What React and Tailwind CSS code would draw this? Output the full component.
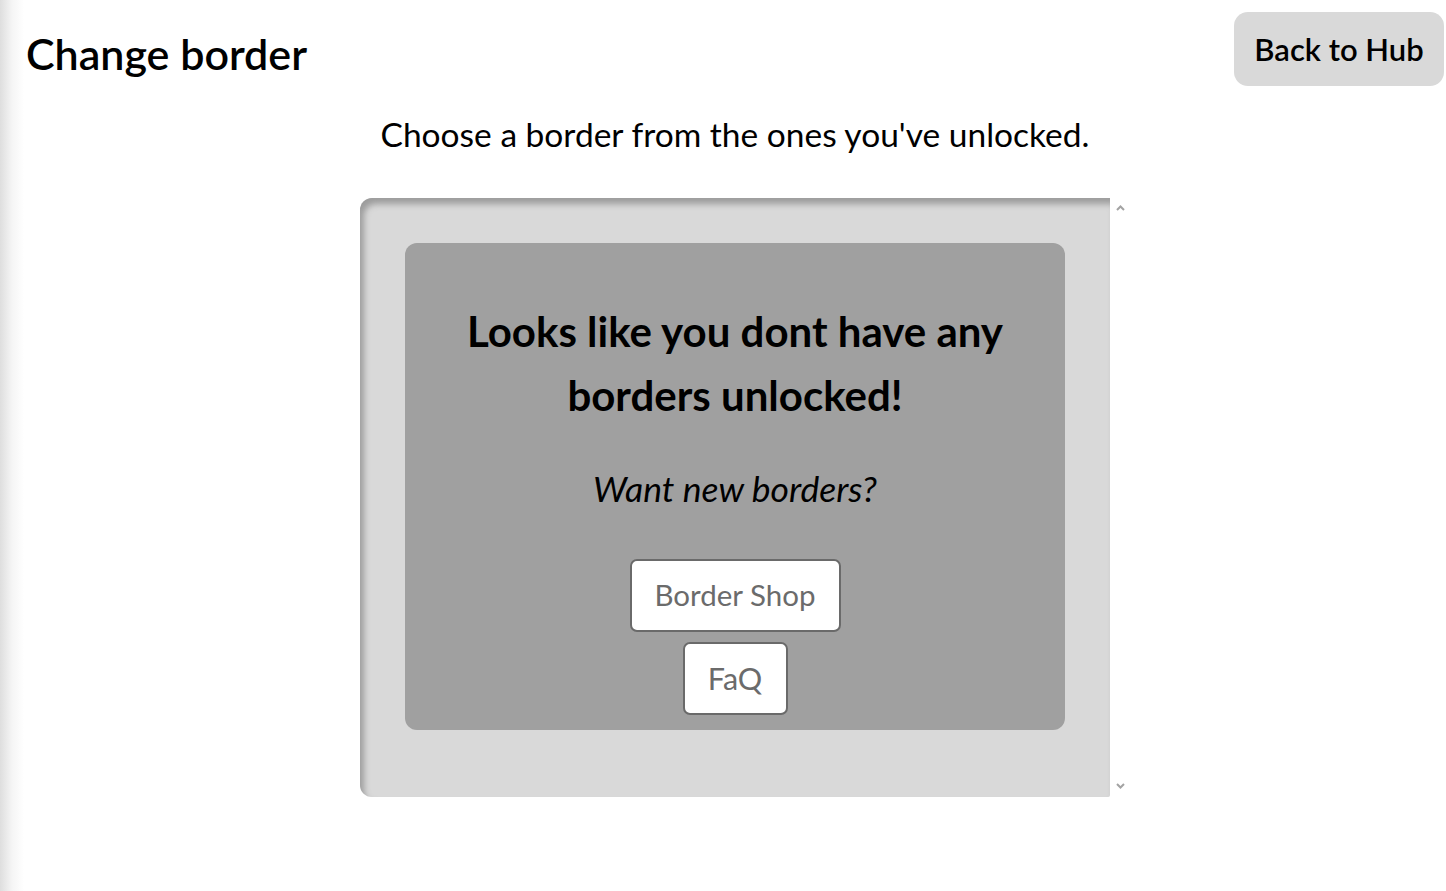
import React from 'react';

const font = { fontFamily: 'Lato, "Noto Sans", sans-serif' };

const Chevron = ({ down }) => (
  <svg width="9" height="6" viewBox="0 0 9 6" className={down ? 'rotate-180' : ''}>
    <path d="M1 5 L4.5 1.5 L8 5" fill="none" stroke="#a3a3a3" strokeWidth="2" />
  </svg>
);

const App = () => {
  return (
    <div className="flex min-h-[891px] w-full bg-white text-black" style={font}>
      <div className="w-[24px] shrink-0 bg-gradient-to-r from-[#dedede] via-[#f5f5f5] to-white" />
      <div className="flex flex-1 flex-col">
        <div className="flex items-start justify-between">
          <h1 className="ml-[2px] mt-[29px] text-[43px] font-semibold leading-[50px]">Change border</h1>
          <button className="mr-[2px] mt-[12px] h-[74px] w-[210px] rounded-[14px] bg-[#d9d9d9] text-[31px] font-semibold">
            Back to Hub
          </button>
        </div>
        <p className="mt-[26px] text-center text-[33.5px] leading-[44px]">Choose a border from the ones you've unlocked.</p>
        <div className="mx-auto mt-[42px] w-[750px]">
          <div className="flex h-[599px] w-[770px]">
            <div className="w-[750px] rounded-l-[12px] rounded-br-[2px] bg-[#d9d9d9] p-[45px] shadow-[inset_4px_6px_6px_#9c9c9c]">
              <div className="flex flex-col items-center rounded-[12px] bg-[#a0a0a0] px-[30px] pb-[15px] pt-[56px]">
                <h2 className="text-center text-[42px] font-bold leading-[64px]">
                  Looks like you dont have any
                  <br />
                  borders unlocked!
                </h2>
                <p className="mt-[40px] text-[35.5px] italic leading-[44px]">Want new borders?</p>
                <button className="mt-[48px] h-[73px] w-[211px] rounded-[7px] border-2 border-[#6a6a6a] bg-white text-[29.5px] text-[#6b6b6b]">
                  Border Shop
                </button>
                <button className="mt-[10px] h-[73px] w-[105px] rounded-[7px] border-2 border-[#6a6a6a] bg-white text-[30.5px] text-[#6b6b6b]">
                  FaQ
                </button>
              </div>
            </div>
            <div className="flex w-[20px] flex-col items-center justify-between bg-white pb-[8px] pt-[7px]">
              <Chevron />
              <Chevron down />
            </div>
          </div>
        </div>
      </div>
    </div>
  );
};

export default App;
